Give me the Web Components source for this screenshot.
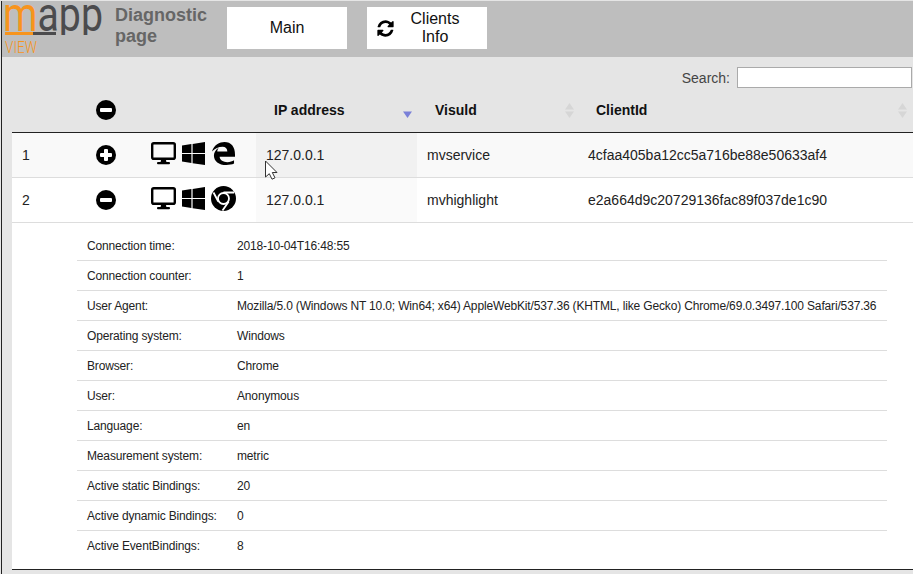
<!DOCTYPE html>
<html lang="en">
<head>
<meta charset="utf-8">
<title>Diagnostic page</title>
<style>
  html, body { margin: 0; height: 100%; overflow: hidden; background: #e5e5e5; }
  body { font-family: "Liberation Sans", Arial, sans-serif; color: #111; }
  diag-page { height: 100%; }
</style>
</head>
<body>
<diag-page>
  <top-bar></top-bar>
  <client-table>
    <client-row num="1" state="plus" browser="edge" ip="127.0.0.1" visu="mvservice" client="4cfaa405ba12cc5a716be88e50633af4" shaded></client-row>
    <client-row num="2" state="minus" browser="chrome" ip="127.0.0.1" visu="mvhighlight" client="e2a664d9c20729136fac89f037de1c90"></client-row>
    <client-details>
      <detail-row label="Connection time:">2018-10-04T16:48:55</detail-row>
      <detail-row label="Connection counter:">1</detail-row>
      <detail-row label="User Agent:">Mozilla/5.0 (Windows NT 10.0; Win64; x64) AppleWebKit/537.36 (KHTML, like Gecko) Chrome/69.0.3497.100 Safari/537.36</detail-row>
      <detail-row label="Operating system:">Windows</detail-row>
      <detail-row label="Browser:">Chrome</detail-row>
      <detail-row label="User:">Anonymous</detail-row>
      <detail-row label="Language:">en</detail-row>
      <detail-row label="Measurement system:">metric</detail-row>
      <detail-row label="Active static Bindings:">20</detail-row>
      <detail-row label="Active dynamic Bindings:">0</detail-row>
      <detail-row label="Active EventBindings:">8</detail-row>
    </client-details>
  </client-table>
</diag-page>

<script>
// icons, shared by the row and the header
const ICONS = {
  refresh: `<svg width="19" height="19" viewBox="0 0 1792 1792"><path d="M1639 1056q0 5-1 7-64 268-268 434.5t-478 166.5q-146 0-282.5-55t-243.5-157l-129 129q-19 19-45 19t-45-19-19-45v-448q0-26 19-45t45-19h448q26 0 45 19t19 45-19 45l-137 137q71 66 161 102t187 36q134 0 250-65t186-179q11-17 53-117 8-23 30-23h192q13 0 22.5 9.5t9.5 22.5zm25-800v448q0 26-19 45t-45 19h-448q-26 0-45-19t-19-45 19-45l138-138q-148-137-349-137-134 0-250 65t-186 179q-11 17-53 117-8 23-30 23h-199q-13 0-22.5-9.5t-9.5-22.5v-7q65-268 270-434.5t480-166.5q146 0 284 55.5t245 156.5l130-129q19-19 45-19t45 19 19 45z"/></svg>`,
  minus: `<svg width="20" height="20" viewBox="0 0 20 20"><circle cx="10" cy="10" r="10"/><rect x="4" y="8" width="12" height="4" rx="1" fill="#fff"/></svg>`,
  plus: `<svg width="20" height="20" viewBox="0 0 20 20"><circle cx="10" cy="10" r="10"/><rect x="4" y="8" width="12" height="4" rx="1" fill="#fff"/><rect x="8" y="4" width="4" height="12" rx="1" fill="#fff"/></svg>`,
  desktop: `<svg width="25" height="23" viewBox="0 0 25 23"><rect x="1.200" y="1.200" width="22.600" height="15.600" rx="1.600" fill="none" stroke="#000" stroke-width="2.400"/><path d="M10 18h5l.5 2.500h-6z"/><rect x="6" y="20" width="13" height="2.200" rx="1"/></svg>`,
  windows: `<svg width="23" height="23" viewBox="0 0 23 23"><path d="M0 3.400 9.400 2.100v8.800H0zM10.600 1.900 23 0v10.900H10.600zM0 12.100h9.400v8.900L0 19.600zM10.600 12.100H23V23l-12.400-1.800z"/></svg>`,
  edge: `<svg width="23" height="25" viewBox="0 0 24 24" style="margin-left:1px"><path d="M0 10C2 3 8 0 13 0 20 0 24 5 24 13v2.500H8C8 19 12 21 16 21c3 0 5-1 7-2v3.500C21 23.500 18 24 15 24 7 24 2 20 2 14 2 11 4 8 7 6 6 7.500 5.500 9 5.500 10H16C16 7 14 5 11 5 7 5 3 7 0 10Z"/></svg>`,
  chrome: `<svg width="25" height="25" viewBox="0 0 25 25"><circle cx="12.500" cy="12.500" r="12.500"/><circle cx="12.500" cy="12.500" r="5.500" fill="none" stroke="#fff" stroke-width="1.800"/><path d="M12.500 6.500H23M7.300 15.500 2.500 6.500M17.600 15.800 11.500 24.500" stroke="#fff" stroke-width="1.800" fill="none"/></svg>`
};

class DiagPage extends HTMLElement {
  constructor(){
    super();
    this.attachShadow({mode: 'open'});
    this.shadowRoot.innerHTML = `
      <style>
        :host { display: block; margin: 1px 0 0 1px; border-left: 1px solid #222; position: relative; overflow: hidden; }
        svg { position: absolute; left: 262px; top: 159px; }
      </style>
      <slot></slot>
      <svg width="14" height="20" viewBox="0 0 14 20"><path d="M1.500 1V17L5.300 13.700 8 19.200 11 17.800 8.300 12.500H13Z" fill="#fff" stroke="#333" stroke-width="1"/></svg>
    `;
  }
}

class TopBar extends HTMLElement {
  constructor(){
    super();
    this.attachShadow({mode: 'open'});
    this.shadowRoot.innerHTML = `
      <style>
        :host { display: flex; height: 56px; box-sizing: border-box; background: #bebebe; padding-top: 6px; }
        h1 { margin: -2px 0 0; width: 112px; font: bold 18px/21px "Liberation Sans", Arial, sans-serif; color: #666; }
        .buttons { display: flex; gap: 20px; }
      </style>
      <mapp-logo></mapp-logo>
      <h1>Diagnostic page</h1>
      <div class="buttons">
        <nav-button>Main</nav-button>
        <nav-button icon="refresh">Clients Info</nav-button>
      </div>
    `;
  }
}

class MappLogo extends HTMLElement {
  constructor(){
    super();
    this.attachShadow({mode: 'open'});
    this.shadowRoot.innerHTML = `
      <style>
        :host { display: block; width: 113px; height: 56px; margin-top: -6px; }
        svg { display: block; }
        text { font-family: Roboto, "Liberation Sans", sans-serif; }
      </style>
      <svg width="113" height="56" viewBox="0 0 113 56">
        <text x="1" y="30" font-size="49" fill="#4b4b4d" textLength="100" lengthAdjust="spacingAndGlyphs"><tspan fill="#f7941d">m</tspan>app</text>
        <rect x="50" y="34" width="60" height="9" fill="#bebebe"/>
        <rect x="3" y="31" width="28" height="3" fill="#f7941d"/>
        <rect x="31" y="31" width="23" height="3" fill="#4b4b4d"/>
        <text x="3" y="52" font-size="17" font-weight="300" fill="#f7941d" textLength="32" lengthAdjust="spacingAndGlyphs">VIEW</text>
      </svg>
    `;
  }
}

class NavButton extends HTMLElement {
  constructor(){
    super();
    this.attachShadow({mode: 'open'});
    const icon = this.getAttribute('icon');
    this.shadowRoot.innerHTML = `
      <style>
        :host { display: flex; align-items: center; width: 120px; height: 42px; background: #fff; font: 16px/18px "Liberation Sans", Arial, sans-serif; color: #111; text-align: center; box-sizing: border-box; padding: 0 10px 0 ${icon ? '9px' : '10px'}; }
        svg { flex: none; display: block; }
        span { flex: 1; padding-right: ${icon ? '2px' : '0'}; }
      </style>
      ${icon ? ICONS[icon] : ''}
      <span><slot></slot></span>
    `;
  }
}

class ClientTable extends HTMLElement {
  constructor(){
    super();
    this.attachShadow({mode: 'open'});
    this.shadowRoot.innerHTML = `
      <style>
        :host { display: block; margin-left: 10px; }
        .search { display: flex; justify-content: flex-end; align-items: center; gap: 7px; height: 21px; padding: 10px 1px 0 0; font-size: 14px; color: #444; }
        input { width: 175px; height: 21px; box-sizing: border-box; border: 1px solid #aaa; background: #fff; margin: 0; padding: 0; }
        .head { display: grid; grid-template-columns: 74px 40px 130px 161px 161px 1fr; height: 44px; border-bottom: 1px solid #222; align-items: center; font-weight: bold; font-size: 14px; color: #111; }
        .toggle { display: flex; justify-content: center; }
        .toggle svg { display: block; }
        .end { border-bottom: 1px solid #222; }
      </style>
      <div class="search"><label for="q">Search:</label><input id="q" type="text"></div>
      <div class="head">
        <span></span>
        <span class="toggle">${ICONS.minus}</span>
        <span></span>
        <sort-head dir="down">IP address</sort-head>
        <sort-head>Visuld</sort-head>
        <sort-head last>ClientId</sort-head>
      </div>
      <div class="end"><slot></slot></div>
    `;
  }
}

class SortHead extends HTMLElement {
  constructor(){
    super();
    this.attachShadow({mode: 'open'});
    const down = this.getAttribute('dir') === 'down';
    const right = down ? 5 : this.hasAttribute('last') ? 6 : 4;
    this.shadowRoot.innerHTML = `
      <style>
        :host { display: flex; justify-content: space-between; align-items: center; padding: 0 ${right}px 0 18px; }
        svg { display: block; }
      </style>
      <span><slot></slot></span>
      <svg width="9" height="15" viewBox="0 0 9 15">
        ${down ? '' : '<path d="M4.500 0 9 6.500H0z" fill="#d6d6d6"/>'}
        <path d="M0 8.500H9L4.500 15z" fill="${down ? '#7a80d8' : '#d6d6d6'}"/>
      </svg>
    `;
  }
}

class ClientRow extends HTMLElement {
  constructor(){
    super();
    this.attachShadow({mode: 'open'});
    const a = n => this.getAttribute(n);
    const shaded = this.hasAttribute('shaded');
    this.shadowRoot.innerHTML = `
      <style>
        :host { display: grid; grid-template-columns: 74px 40px 130px 161px 161px 1fr; height: 45px; box-sizing: border-box; border-bottom: 1px solid #ddd; background: ${shaded ? '#f9f9f9' : '#fff'}; font-size: 14px; color: #222; align-items: stretch; }
        div { display: flex; align-items: center; }
        .num { padding-left: 10px; }
        .toggle { justify-content: center; }
        .icons { padding: 0 0 3px 25px; gap: 6px; }
        .icons svg { display: block; flex: none; }
        .ip { padding-left: 10px; background: ${shaded ? '#f1f1f1' : '#fafafa'}; }
        .txt { padding-left: 10px; }
      </style>
      <div class="num">${a('num')}</div>
      <div class="toggle">${ICONS[a('state')]}</div>
      <div class="icons">${ICONS.desktop}${ICONS.windows}${ICONS[a('browser')]}</div>
      <div class="ip">${a('ip')}</div>
      <div class="txt">${a('visu')}</div>
      <div class="txt">${a('client')}</div>
    `;
  }
}

class ClientDetails extends HTMLElement {
  constructor(){
    super();
    this.attachShadow({mode: 'open'});
    this.shadowRoot.innerHTML = `
      <style>
        :host { display: block; background: #fff; padding: 8px 26px 8px 65px; }
      </style>
      <slot></slot>
    `;
  }
}

class DetailRow extends HTMLElement {
  constructor(){
    super();
    this.attachShadow({mode: 'open'});
    this.shadowRoot.innerHTML = `
      <style>
        :host { display: flex; align-items: center; height: 30px; box-sizing: border-box; border-bottom: 1px solid #ddd; padding-left: 10px; font-size: 12px; letter-spacing: -.155px; color: #222; white-space: nowrap; }
        :host(:last-child) { border-bottom: 0; }
        .label { width: 150px; flex: none; }
      </style>
      <span class="label">${this.getAttribute('label')}</span>
      <span><slot></slot></span>
    `;
  }
}

customElements.define('mapp-logo', MappLogo);
customElements.define('nav-button', NavButton);
customElements.define('top-bar', TopBar);
customElements.define('sort-head', SortHead);
customElements.define('client-row', ClientRow);
customElements.define('detail-row', DetailRow);
customElements.define('client-details', ClientDetails);
customElements.define('client-table', ClientTable);
customElements.define('diag-page', DiagPage);
</script>
</body>
</html>
